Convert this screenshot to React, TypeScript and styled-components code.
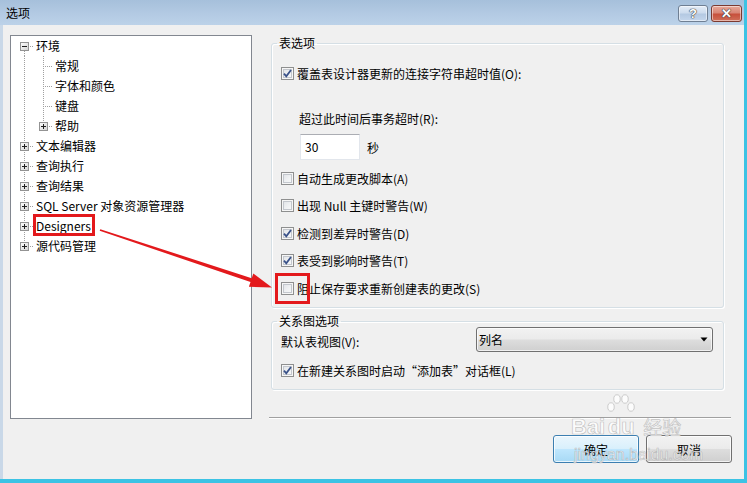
import React from "react";
import styled, { createGlobalStyle } from "styled-components";

const FONT = `"Noto Sans CJK SC", "Noto Sans", "Liberation Sans", sans-serif`;

const GlobalStyle = createGlobalStyle`
  html, body { margin: 0; padding: 0; background: #f0f0f0; }
  body { font-family: ${FONT}; }
  * { box-sizing: border-box; }
`;

const Window = styled.div`
  position: relative;
  width: 747px;
  height: 483px;
  display: flex;
  flex-direction: column;
  border-right: 3px solid #3cc3e4;
  border-bottom: 4px solid #3cc3e4;
  font-family: ${FONT};
  font-size: 12px;
  color: #000;
  overflow: hidden;
`;

const TitleBar = styled.div`
  height: 25px;
  flex: none;
  display: flex;
  align-items: flex-start;
  justify-content: space-between;
  background: linear-gradient(180deg, #a6c0db 0%, #b3cae3 55%, #bcd2e9 100%);
`;

const Title = styled.div`
  padding: 4px 0 0 6px;
  line-height: 17px;
  font-size: 12px;
  color: #000;
`;

const CaptionButtons = styled.div`
  display: flex;
  gap: 3px;
  margin-top: 5px;
  padding-right: 2px;
`;

const CaptionButton = styled.div<{ $danger?: boolean }>`
  width: ${(p) => (p.$danger ? 31 : 30)}px;
  height: 17px;
  border-radius: 3px;
  border: 1px solid ${(p) => (p.$danger ? "#7b3a30" : "#6f7f93")};
  background: ${(p) =>
    p.$danger
      ? "linear-gradient(180deg, #e8a898 0%, #d88676 45%, #c7503c 55%, #d0705a 100%)"
      : "linear-gradient(180deg, #e4edf7 0%, #cddcee 45%, #b4c9e2 55%, #c4d6ec 100%)"};
  box-shadow: inset 0 0 0 1px rgba(255, 255, 255, 0.5);
  display: flex;
  align-items: center;
  justify-content: center;
  font-family: "Liberation Sans", sans-serif;
  font-weight: bold;
  font-size: 13px;
  line-height: 1;
  color: #fff;
  text-shadow: 0 0 1px #333, 0 0 1px #333, 0 0 1px #555;
`;

const Body = styled.div`
  flex: 1;
  display: flex;
  flex-direction: column;
  background: #f0f0f0;
  border-left: 3px solid #c9d8e8;
  padding: 10px 12px 0 7px;
`;

const Top = styled.div`
  display: flex;
  height: 384px;
`;

const Tree = styled.div`
  width: 242px;
  height: 384px;
  flex: none;
  background: #fff;
  border: 1px solid #828790;
  padding: 0 0 0 4px;
`;

const TreeRowBox = styled.div`
  display: flex;
  align-items: center;
  height: 20px;
  white-space: nowrap;
`;

const GuideCell = styled.svg`
  width: 19px;
  height: 20px;
  flex: none;
  display: block;
`;

const NodeLabel = styled.span`
  margin-left: 2px;
  line-height: 16px;
`;

const RightCol = styled.div`
  flex: 1;
  margin-left: 17px;
  display: flex;
  flex-direction: column;
`;

const Group = styled.fieldset<{ $height: number; $mt?: number }>`
  margin: ${(p) => p.$mt ?? 0}px 0 0 2px;
  width: 453px;
  height: ${(p) => p.$height}px;
  min-width: 0;
  border: 1px solid #d5dfe5;
  border-radius: 3px;
  box-shadow: inset 1px 1px 0 #fff, 1px 1px 0 #fff;
  padding: 0 0 0 9px;
  display: flex;
  flex-direction: column;
`;

const Legend = styled.legend`
  padding: 0 2px;
  margin-left: -4px;
  line-height: 16px;
  font-size: 12px;
`;

const CheckRow = styled.label<{ $mt?: number }>`
  display: flex;
  align-items: center;
  gap: 3px;
  height: 20px;
  margin-top: ${(p) => p.$mt ?? 0}px;
  white-space: nowrap;
`;

const Box = styled.span`
  width: 13px;
  height: 13px;
  flex: none;
  border: 1px solid #8e8f8f;
  background: linear-gradient(135deg, #dcdfe3 0%, #eef0f2 50%, #fbfbfb 100%);
  box-shadow: inset 0 0 0 1px #f6f6f6, inset 0 0 0 2px #c3c7cd;
  display: flex;
  align-items: center;
  justify-content: center;
`;

const SubLabel = styled.div`
  margin-top: 26px;
  height: 20px;
  line-height: 20px;
  padding-left: 18px;
`;

const InputRow = styled.div`
  margin-top: 5px;
  padding-left: 19px;
  display: flex;
  align-items: center;
  gap: 7px;
`;

const TextInput = styled.div`
  width: 60px;
  height: 26px;
  background: #fff;
  border: 1px solid #e2e6ec;
  border-top-color: #abadb3;
  padding-left: 4px;
  line-height: 24px;
`;

const CheckList = styled.div`
  margin-top: 8px;
  display: flex;
  flex-direction: column;
  gap: 7.5px;
`;

const SelectRow = styled.div`
  margin-top: -2px;
  display: flex;
  align-items: center;
`;

const SelectLabel = styled.span`
  width: 195px;
  padding-top: 4px;
`;

const Select = styled.div`
  width: 237px;
  height: 25px;
  border: 1px solid #707070;
  border-radius: 3px;
  background: linear-gradient(180deg, #f2f2f2 0%, #ebebeb 48%, #dddddd 52%, #cfcfcf 100%);
  box-shadow: inset 0 0 0 1px rgba(255, 255, 255, 0.7);
  display: flex;
  align-items: center;
  justify-content: space-between;
  padding: 0 4px 0 2px;
`;

const Separator = styled.div`
  margin-top: auto;
  width: 462px;
  height: 2px;
  border-top: 1px solid #a0a0a0;
  border-bottom: 1px solid #ffffff;
`;

const ButtonRow = styled.div`
  margin-top: 16px;
  display: flex;
  justify-content: flex-end;
  gap: 7px;
`;

const DialogButton = styled.div<{ $default?: boolean }>`
  width: 86px;
  height: 28px;
  border-radius: 3px;
  border: 1px solid ${(p) => (p.$default ? "#3c7fb1" : "#707070")};
  background: ${(p) =>
    p.$default
      ? "linear-gradient(180deg, #eaf6fd 0%, #d9f0fc 48%, #bee6fd 52%, #a7d9f5 100%)"
      : "linear-gradient(180deg, #f2f2f2 0%, #ebebeb 48%, #dddddd 52%, #cfcfcf 100%)"};
  box-shadow: inset 0 0 0 1px rgba(255, 255, 255, 0.75);
  display: flex;
  align-items: center;
  justify-content: center;
`;

const Annotations = styled.svg`
  position: absolute;
  left: 0;
  top: 0;
  width: 747px;
  height: 483px;
  pointer-events: none;
`;

const Watermark = styled.div`
  position: absolute;
  left: 571px;
  top: 398px;
  display: flex;
  flex-direction: column;
  align-items: flex-start;
  pointer-events: none;
  color: rgba(255, 255, 255, 0.8);
  -webkit-text-stroke: 0.7px rgba(150, 150, 150, 0.55);
`;

const WmTop = styled.div`
  display: flex;
  align-items: flex-end;
  height: 42px;
`;

const WmBig = styled.span`
  font-family: "Liberation Sans", sans-serif;
  font-weight: bold;
  font-size: 22px;
  line-height: 26px;
`;

const WmPaw = styled.span`
  display: flex;
  flex-direction: column;
  align-items: center;
`;

const WmCn = styled.span`
  font-size: 19px;
  line-height: 26px;
  margin-left: 6px;
`;

const WmUrl = styled.span`
  font-family: "Liberation Sans", sans-serif;
  font-size: 16px;
  line-height: 18px;
  margin-top: 6px;
  margin-left: 3px;
`;

type Guide = "blank" | "pipe" | "tee" | "end" | "start";

const GuideSvg: React.FC<{ kind: Guide; exp?: "plus" | "minus" }> = ({ kind, exp }) => {
  const dot = { stroke: "#a0a0a0", strokeWidth: 1, strokeDasharray: "1 1", shapeRendering: "crispEdges" as const };
  let v: React.ReactNode = null;
  if (kind === "pipe" || kind === "tee") v = <line x1={9.5} y1={0} x2={9.5} y2={20} {...dot} />;
  if (kind === "end") v = <line x1={9.5} y1={0} x2={9.5} y2={10} {...dot} />;
  if (kind === "start") v = <line x1={9.5} y1={11} x2={9.5} y2={20} {...dot} />;
  const h = kind !== "blank" && kind !== "pipe" ? <line x1={11} y1={10.5} x2={19} y2={10.5} {...dot} /> : null;
  return (
    <GuideCell viewBox="0 0 19 20">
      <defs>
        <linearGradient id="expg" x1="0" y1="0" x2="1" y2="1">
          <stop offset="0" stopColor="#ffffff" />
          <stop offset="1" stopColor="#d2d2d2" />
        </linearGradient>
      </defs>
      {v}
      {h}
      {exp && (
        <g shapeRendering="crispEdges">
          <rect x={5.5} y={6.5} width={8} height={8} fill="url(#expg)" stroke="#939393" />
          <rect x={7} y={10} width={5} height={1} fill="#1e1e1e" />
          {exp === "plus" && <rect x={9} y={8} width={1} height={5} fill="#1e1e1e" />}
        </g>
      )}
    </GuideCell>
  );
};

const rows: { guides: Guide[]; exp?: "plus" | "minus"; label: string }[] = [
  { guides: ["start"], exp: "minus", label: "环境" },
  { guides: ["pipe", "tee"], label: "常规" },
  { guides: ["pipe", "tee"], label: "字体和颜色" },
  { guides: ["pipe", "tee"], label: "键盘" },
  { guides: ["pipe", "end"], exp: "plus", label: "帮助" },
  { guides: ["tee"], exp: "plus", label: "文本编辑器" },
  { guides: ["tee"], exp: "plus", label: "查询执行" },
  { guides: ["tee"], exp: "plus", label: "查询结果" },
  { guides: ["tee"], exp: "plus", label: "SQL Server 对象资源管理器" },
  { guides: ["tee"], exp: "plus", label: "Designers" },
  { guides: ["end"], exp: "plus", label: "源代码管理" },
];

const Check: React.FC<{ checked?: boolean; mt?: number; children: React.ReactNode }> = ({ checked, mt, children }) => (
  <CheckRow $mt={mt}>
    <Box>
      {checked && (
        <svg width="11" height="11" viewBox="0 0 11 11">
          <path d="M2 5.6 L4.3 8.4 L9 2" fill="none" stroke="#3a5289" strokeWidth="1.8" />
        </svg>
      )}
    </Box>
    <span>{children}</span>
  </CheckRow>
);

export default function App() {
  return (
    <>
      <GlobalStyle />
      <Window>
        <TitleBar>
          <Title>选项</Title>
          <CaptionButtons>
            <CaptionButton>?</CaptionButton>
            <CaptionButton $danger>✕</CaptionButton>
          </CaptionButtons>
        </TitleBar>
        <Body>
          <Top>
            <Tree>
              {rows.map((r, i) => (
                <TreeRowBox key={i}>
                  {r.guides.map((g, j) => (
                    <GuideSvg key={j} kind={g} exp={j === r.guides.length - 1 ? r.exp : undefined} />
                  ))}
                  <NodeLabel>{r.label}</NodeLabel>
                </TreeRowBox>
              ))}
            </Tree>
            <RightCol>
              <Group $height={273}>
                <Legend>表选项</Legend>
                <Check checked mt={12}>覆盖表设计器更新的连接字符串超时值(O):</Check>
                <SubLabel>超过此时间后事务超时(R):</SubLabel>
                <InputRow>
                  <TextInput>30</TextInput>
                  <span>秒</span>
                </InputRow>
                <CheckList>
                  <Check>自动生成更改脚本(A)</Check>
                  <Check>出现 Null 主键时警告(W)</Check>
                  <Check checked>检测到差异时警告(D)</Check>
                  <Check checked>表受到影响时警告(T)</Check>
                  <Check>阻止保存要求重新创建表的更改(S)</Check>
                </CheckList>
              </Group>
              <Group $height={77} $mt={5}>
                <Legend>关系图选项</Legend>
                <SelectRow>
                  <SelectLabel>默认表视图(V):</SelectLabel>
                  <Select>
                    <span>列名</span>
                    <svg width="8" height="5" viewBox="0 0 8 5">
                      <path d="M0.5 0.5 H7.5 L4 4.5 Z" fill="#000" />
                    </svg>
                  </Select>
                </SelectRow>
                <Check checked mt={8}>在新建关系图时启动“添加表”对话框(L)</Check>
              </Group>
              <Separator />
            </RightCol>
          </Top>
          <ButtonRow>
            <DialogButton $default>确定</DialogButton>
            <DialogButton>取消</DialogButton>
          </ButtonRow>
        </Body>
        <Watermark>
          <WmTop>
            <WmBig>Bai</WmBig>
            <WmPaw>
              <svg width="32" height="20" viewBox="0 0 32 20">
                <g fill="rgba(255,255,255,0.8)" stroke="rgba(150,150,150,0.55)" strokeWidth="0.8">
                  <ellipse cx="6" cy="13" rx="3.2" ry="4.2" />
                  <ellipse cx="12" cy="5" rx="3.2" ry="4.2" />
                  <ellipse cx="20" cy="5" rx="3.2" ry="4.2" />
                  <ellipse cx="26" cy="13" rx="3.2" ry="4.2" />
                </g>
              </svg>
              <WmBig>du</WmBig>
            </WmPaw>
            <WmCn>经验</WmCn>
          </WmTop>
          <WmUrl>jingyan.baidu.com</WmUrl>
        </Watermark>
        <Annotations viewBox="0 0 747 483">
          <rect x={34.5} y={215.5} width={59} height={19} fill="none" stroke="#e3191c" strokeWidth={3} />
          <rect x={276.5} y={274.5} width={32} height={28} fill="none" stroke="#e3191c" strokeWidth={3} />
          <polygon
            points="100.3,229.2 251.7,278.2 253.3,273.5 272,287.5 248.9,286.7 250.5,282.0 99.7,230.8"
            fill="#e3191c"
          />
        </Annotations>
      </Window>
    </>
  );
}
